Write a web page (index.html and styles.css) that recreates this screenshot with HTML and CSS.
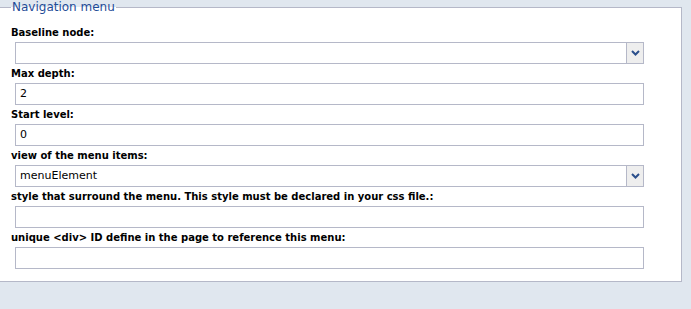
FILE: index.html
```html
<!DOCTYPE html>
<html>
<head>
<meta charset="utf-8">
<link rel="stylesheet" href="styles.css">
</head>
<body>
<fieldset class="panel">
  <legend class="panel-title">Navigation menu</legend>
  <div class="field">
    <label class="label">Baseline node:</label>
    <div class="select"><span class="select-value"></span><span class="select-btn"><svg width="9" height="6" viewBox="0 0 9 6"><path d="M1 1 L4.5 4.5 L8 1" fill="none" stroke="#2b4f8c" stroke-width="2"/></svg></span></div>
  </div>
  <div class="field">
    <label class="label">Max depth:</label>
    <div class="input">2</div>
  </div>
  <div class="field">
    <label class="label">Start level:</label>
    <div class="input">0</div>
  </div>
  <div class="field">
    <label class="label">view of the menu items:</label>
    <div class="select"><span class="select-value">menuElement</span><span class="select-btn"><svg width="9" height="6" viewBox="0 0 9 6"><path d="M1 1 L4.5 4.5 L8 1" fill="none" stroke="#2b4f8c" stroke-width="2"/></svg></span></div>
  </div>
  <div class="field">
    <label class="label">style that surround the menu. This style must be declared in your css file.:</label>
    <div class="input"></div>
  </div>
  <div class="field">
    <label class="label">unique &lt;div&gt; ID define in the page to reference this menu:</label>
    <div class="input"></div>
  </div>
</fieldset>
</body>
</html>
```
FILE: styles.css
```css
html, body {
  margin: 0;
  padding: 0;
  background: #e0e7ef;
  width: 691px;
  height: 309px;
  overflow: hidden;
}
body {
  font-family: "DejaVu Sans", Verdana, sans-serif;
}
.panel {
  box-sizing: border-box;
  margin: 0;
  width: 682px;
  padding: 9px 37px 12px 11px;
  border: 1px solid #b5b8c8;
  border-left: none;
  background: #fff;
}
.panel-title {
  padding: 0 1px;
  color: #1f4c97;
  font-size: 12px;
  line-height: 14px;
}
.field {
  display: flex;
  flex-direction: column;
}
.label {
  font-weight: bold;
  font-size: 10px;
  color: #000;
  line-height: 19px;
  height: 19px;
  white-space: nowrap;
}
.input, .select {
  margin-left: 4px;
  height: 20px;
  border: 1px solid #b5b8c8;
  font-size: 11px;
  line-height: 20px;
  padding-left: 4px;
  color: #000;
  background: #fff;
}
.select {
  display: flex;
  padding-left: 0;
}
.select-value {
  flex: 1;
  padding-left: 4px;
}
.select-btn {
  width: 16px;
  border-left: 1px solid #b5b8c8;
  background: #eeeeee;
  display: flex;
  align-items: center;
  justify-content: center;
}
```
